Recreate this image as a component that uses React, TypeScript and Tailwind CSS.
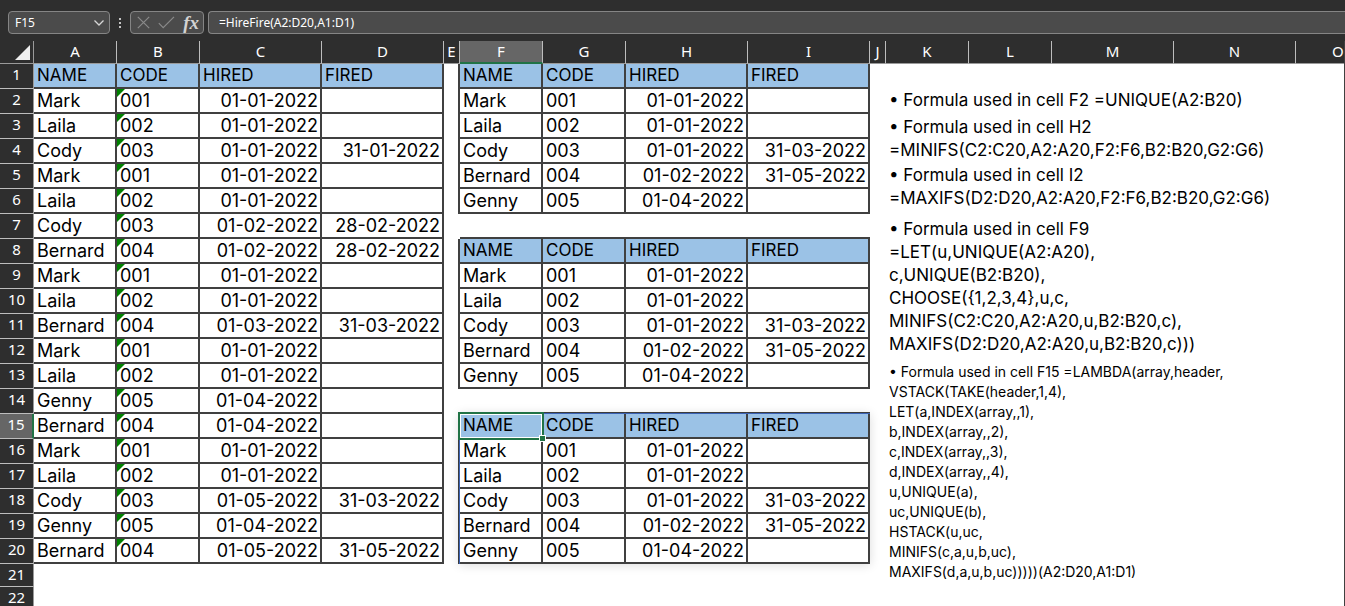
import clsx from "clsx"

const COLUMNS = [
  { name: "A", width: "w-[83px]" },
  { name: "B", width: "w-[83px]" },
  { name: "C", width: "w-[122px]" },
  { name: "D", width: "w-[122px]" },
  { name: "E", width: "w-[16px]" },
  { name: "F", width: "w-[83px]" },
  { name: "G", width: "w-[83px]" },
  { name: "H", width: "w-[122px]" },
  { name: "I", width: "w-[122px]" },
  { name: "J", width: "w-[16px]" },
  { name: "K", width: "w-[83px]" },
  { name: "L", width: "w-[83px]" },
  { name: "M", width: "w-[122px]" },
  { name: "N", width: "w-[122px]" },
  { name: "O", width: "" },
]

const HEADER = ["NAME", "CODE", "HIRED", "FIRED"]

// A1:D20
const SOURCE = [
  HEADER,
  ["Mark", "001", "01-01-2022", ""],
  ["Laila", "002", "01-01-2022", ""],
  ["Cody", "003", "01-01-2022", "31-01-2022"],
  ["Mark", "001", "01-01-2022", ""],
  ["Laila", "002", "01-01-2022", ""],
  ["Cody", "003", "01-02-2022", "28-02-2022"],
  ["Bernard", "004", "01-02-2022", "28-02-2022"],
  ["Mark", "001", "01-01-2022", ""],
  ["Laila", "002", "01-01-2022", ""],
  ["Bernard", "004", "01-03-2022", "31-03-2022"],
  ["Mark", "001", "01-01-2022", ""],
  ["Laila", "002", "01-01-2022", ""],
  ["Genny", "005", "01-04-2022", ""],
  ["Bernard", "004", "01-04-2022", ""],
  ["Mark", "001", "01-01-2022", ""],
  ["Laila", "002", "01-01-2022", ""],
  ["Cody", "003", "01-05-2022", "31-03-2022"],
  ["Genny", "005", "01-04-2022", ""],
  ["Bernard", "004", "01-05-2022", "31-05-2022"],
]

// the same result is spilled from F1, F8 and F15
const RESULT = [
  HEADER,
  ["Mark", "001", "01-01-2022", ""],
  ["Laila", "002", "01-01-2022", ""],
  ["Cody", "003", "01-01-2022", "31-03-2022"],
  ["Bernard", "004", "01-02-2022", "31-05-2022"],
  ["Genny", "005", "01-04-2022", ""],
]
const RESULT_STARTS = [1, 8, 15]

const NOTES = [
  {
    className: "text-[17px] leading-[23px]",
    lines: ["• Formula used in cell F2 =UNIQUE(A2:B20)"],
  },
  {
    className: "mt-1 text-[17px] leading-[23px]",
    lines: ["• Formula used in cell H2", "=MINIFS(C2:C20,A2:A20,F2:F6,B2:B20,G2:G6)"],
  },
  {
    className: "mt-0.5 text-[17px] leading-[23px]",
    lines: ["• Formula used in cell I2", "=MAXIFS(D2:D20,A2:A20,F2:F6,B2:B20,G2:G6)"],
  },
  {
    className: "mt-2 text-[17px] leading-[23px]",
    lines: [
      "• Formula used in cell F9",
      "=LET(u,UNIQUE(A2:A20),",
      "c,UNIQUE(B2:B20),",
      "CHOOSE({1,2,3,4},u,c,",
      "MINIFS(C2:C20,A2:A20,u,B2:B20,c),",
      "MAXIFS(D2:D20,A2:A20,u,B2:B20,c)))",
    ],
  },
  {
    className: "mt-1.5 text-[14px] leading-5",
    lines: [
      "• Formula used in cell F15 =LAMBDA(array,header,",
      "VSTACK(TAKE(header,1,4),",
      "LET(a,INDEX(array,,1),",
      "b,INDEX(array,,2),",
      "c,INDEX(array,,3),",
      "d,INDEX(array,,4),",
      "u,UNIQUE(a),",
      "uc,UNIQUE(b),",
      "HSTACK(u,uc,",
      "MINIFS(c,a,u,b,uc),",
      "MAXIFS(d,a,u,b,uc)))))(A2:D20,A1:D1)",
    ],
  },
]

function getResultRow(row: number) {
  const start = RESULT_STARTS.find((s) => row >= s && row < s + RESULT.length)
  return start === undefined ? undefined : RESULT[row - start]
}

function FormulaBar() {
  return (
    <div className="flex h-[41px] shrink-0 items-start bg-[#2e2e2e] pt-[11px] pl-2 text-[12px] text-white">
      <div className="flex h-[23px] w-[102px] items-center rounded-[4px] border border-[#858585] bg-[#4b4b4b] pr-1 pl-1.5">
        <input aria-label="Name box" defaultValue="F15" className="w-full min-w-0 bg-transparent outline-none" />
        <button aria-label="Open name list" className="shrink-0">
          <svg width="12" height="8" viewBox="0 0 12 8" fill="none" stroke="#d6d6d6" strokeWidth="1.3">
            <path d="M1.5 1.5 6 6l4.5-4.5" />
          </svg>
        </button>
      </div>

      <svg width="20" height="23" viewBox="0 0 20 23" fill="#c4c4c4" className="shrink-0" aria-hidden="true">
        <path d="M9 7h2v2H9zM9 11h2v2H9zM9 15h2v2H9z" />
      </svg>

      <div className="flex h-[23px] w-[74px] shrink-0 items-center justify-between rounded-[4px] border border-[#858585] bg-[#4b4b4b] pr-1 pl-1.5">
        <button aria-label="Cancel">
          <svg width="13" height="13" viewBox="0 0 13 13" fill="none" stroke="#8a8a8a" strokeWidth="1.2">
            <path d="M.8.8l11.4 11.4M12.2.8.8 12.2" />
          </svg>
        </button>
        <button aria-label="Enter">
          <svg width="17" height="13" viewBox="0 0 17 13" fill="none" stroke="#8a8a8a" strokeWidth="1.2">
            <path d="M.8 7.2l4.4 4.4L16 .8" />
          </svg>
        </button>
        <button aria-label="Insert function" className="font-['Liberation_Serif',serif] text-[19px] leading-[19px] font-bold text-[#d2d2d2] italic">
          fx
        </button>
      </div>

      <div className="ml-1 flex h-[23px] min-w-0 flex-1 items-center rounded-l-[4px] border border-r-0 border-[#858585] bg-[#4b4b4b] pl-2.5">
        <input
          aria-label="Formula"
          defaultValue="=HireFire(A2:D20,A1:D1)"
          className="w-full min-w-0 bg-transparent outline-none"
        />
      </div>
    </div>
  )
}

function ColumnHeads() {
  return (
    <thead>
      <tr className="h-[23px] bg-[#2e2e2e] text-[15px] leading-[21px] text-white">
        <td className="border-r border-b border-[#9a9a9a] p-0">
          <svg width="15" height="15" viewBox="0 0 15 15" className="ml-[15px]" aria-hidden="true">
            <path d="M15 0v15H0z" fill="#f0f0f0" />
          </svg>
        </td>
        {COLUMNS.map(({ name }) => (
          <th
            key={name}
            scope="col"
            className={clsx(
              "p-0 align-top font-normal",
              name === "O" ? "pl-9 text-left" : "border-r border-r-[#bdbdbd] text-center",
              name === "F" ? "border-b-2 border-b-[#217346] bg-[#666666]" : "border-b border-b-[#9a9a9a]"
            )}
          >
            {name}
          </th>
        ))}
      </tr>
    </thead>
  )
}

function Selection() {
  return (
    <>
      {/* spill range */}
      <span className="pointer-events-none absolute -top-px -left-px h-[151px] w-[411px] border border-[#3a62b4] shadow-[0_1px_10px_rgba(0,0,0,0.14)]" />
      {/* active cell and fill handle */}
      <span className="pointer-events-none absolute -top-0.5 -right-[3px] -bottom-[3px] -left-0.5 z-10 border-2 border-[#217346]">
        <span className="block h-full border border-white" />
        <span className="absolute -right-1 -bottom-1 size-[7px] border border-white bg-[#217346]" />
      </span>
    </>
  )
}

type CellsProps = { values: string[]; row: number; source?: boolean }

function Cells({ values, row, source }: CellsProps) {
  const isHeader = values === HEADER

  return values.map((value, i) => (
    <td
      key={i}
      className={clsx(
        "relative border-r-2 border-b-2 border-[#404040] py-0 pr-0.5 pl-[3px]",
        isHeader ? "bg-[#9bc2e6] text-[17px]" : "text-[18px]",
        !isHeader && i > 1 ? "text-right" : "text-left"
      )}
    >
      {source && !isHeader && i === 1 && (
        <svg width="8" height="8" viewBox="0 0 8 8" className="absolute top-0 left-0" aria-hidden="true">
          <path d="M0 0h8L0 8z" fill="#008000" />
        </svg>
      )}
      <span className="relative block h-[23px]">{value}</span>
      {!source && row === 15 && i === 0 && <Selection />}
    </td>
  ))
}

function Notes() {
  return (
    <div className="pt-[25px] pl-[3px] whitespace-nowrap">
      {NOTES.map(({ className, lines }) => (
        <p key={lines[0]} className={className}>
          {lines.map((line) => (
            <span key={line} className="block">
              {line}
            </span>
          ))}
        </p>
      ))}
    </div>
  )
}

function Sheet() {
  const rows = Array.from({ length: 22 }, (_, i) => i + 1)

  return (
    <table className="w-full table-fixed border-separate border-spacing-0">
      <colgroup>
        <col className="w-[34px]" />
        {COLUMNS.map(({ name, width }) => (
          <col key={name} className={width} />
        ))}
      </colgroup>
      <ColumnHeads />
      <tbody className="font-['Inter',sans-serif] leading-[23px] text-black">
        {rows.map((row) => {
          const source = SOURCE[row - 1]
          const result = getResultRow(row)
          const opensResult = RESULT_STARTS.includes(row + 1)

          return (
            <tr key={row} className={row > 20 ? "h-[23px]" : "h-[25px]"}>
              <th
                scope="row"
                className={clsx(
                  "border-b border-b-[#bdbdbd] px-0 pt-px pb-0 text-center align-top font-['Noto_Sans',sans-serif] text-[15px] leading-[19px] font-normal text-white",
                  row === 15 ? "border-r-2 border-r-[#217346] bg-[#666666]" : "border-r border-r-[#9a9a9a] bg-[#2e2e2e]"
                )}
              >
                {row}
              </th>
              {source ? <Cells values={source} row={row} source /> : <td colSpan={4} className="p-0" />}
              <td className={clsx("p-0", result && "border-r-2 border-[#404040]")} />
              {result ? (
                <Cells values={result} row={row} />
              ) : (
                <td colSpan={4} className={clsx("p-0", opensResult && "border-b-2 border-[#404040]")} />
              )}
              {row === 1 && <td rowSpan={22} className="p-0" />}
              {row === 1 && (
                <td rowSpan={22} colSpan={5} className="p-0 align-top">
                  <Notes />
                </td>
              )}
            </tr>
          )
        })}
      </tbody>
    </table>
  )
}

export default function App() {
  return (
    <main className="flex h-screen flex-col overflow-hidden bg-white font-['Noto_Sans',sans-serif]">
      <FormulaBar />
      <div className="min-h-0 flex-1 overflow-hidden border-r border-[#404040]">
        <Sheet />
      </div>
    </main>
  )
}
